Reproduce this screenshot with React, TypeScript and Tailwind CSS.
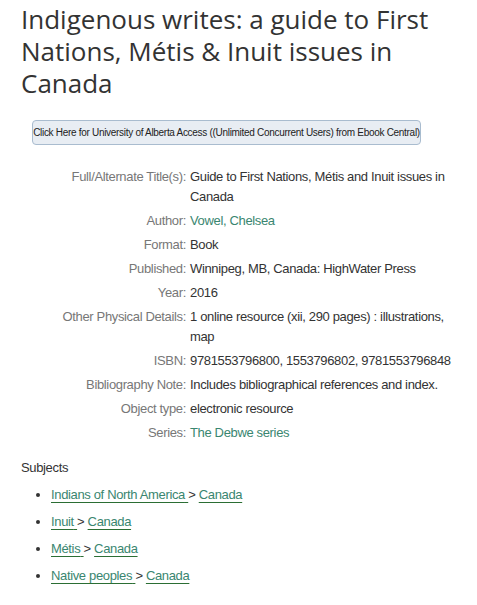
const FIELDS: { label: string; value: string; link?: boolean }[] = [
  { label: 'Full/Alternate Title(s):', value: 'Guide to First Nations, Métis and Inuit issues in Canada' },
  { label: 'Author:', value: 'Vowel, Chelsea', link: true },
  { label: 'Format:', value: 'Book' },
  { label: 'Published:', value: 'Winnipeg, MB, Canada: HighWater Press' },
  { label: 'Year:', value: '2016' },
  { label: 'Other Physical Details:', value: '1 online resource (xii, 290 pages) : illustrations, map' },
  { label: 'ISBN:', value: '9781553796800, 1553796802, 9781553796848' },
  { label: 'Bibliography Note:', value: 'Includes bibliographical references and index.' },
  { label: 'Object type:', value: 'electronic resource' },
  { label: 'Series:', value: 'The Debwe series', link: true },
];

const SUBJECTS = ['Indians of North America', 'Inuit', 'Métis', 'Native peoples'];

const body = "font-['Liberation_Sans',Arial,sans-serif] text-[13px] tracking-[-0.35px]";

export default function App() {
  return (
    <div className="min-h-screen bg-white px-[21px]">
      <h1 className="pt-[3px] font-['Open_Sans',sans-serif] text-[26px] leading-[32px] text-[#333]">
        Indigenous writes: a guide to First Nations, Métis &amp; Inuit issues in Canada
      </h1>

      <div className="mt-[21px] flex pl-[11px]">
        <button className="h-[25px] w-[389px] whitespace-nowrap rounded-[4px] border border-[#a9bccf] bg-[#e8edf3] font-['Liberation_Sans',Arial,sans-serif] text-[10px] tracking-[-0.3px] text-[#222]">
          Click Here for University of Alberta Access ((Unlimited Concurrent Users) from Ebook Central)
        </button>
      </div>

      <dl className={`${body} mt-[22px] flex flex-col gap-[4px] leading-[20px]`}>
        {FIELDS.map((f) => (
          <div key={f.label} className="flex">
            <dt className="w-[165px] shrink-0 text-right text-[#777]">{f.label}</dt>
            <dd className="w-[270px] pl-[4px] text-[#333]">
              {f.link ? <a className="text-[#3a8670]">{f.value}</a> : f.value}
            </dd>
          </div>
        ))}
      </dl>

      <section className={`${body} mt-[15px] leading-[20px]`}>
        <h2 className="text-[#333]">Subjects</h2>
        <ul className="mt-[7px] flex list-disc flex-col gap-[7px] pl-[30px] text-[#333]">
          {SUBJECTS.map((s) => (
            <li key={s}>
              <a className="text-[#3a8670] underline decoration-[#2b6e34] underline-offset-[3px]">{s} </a>
              {' > '}
              <a className="text-[#3a8670] underline decoration-[#2b6e34] underline-offset-[3px]">Canada</a>
            </li>
          ))}
        </ul>
      </section>
    </div>
  );
}
